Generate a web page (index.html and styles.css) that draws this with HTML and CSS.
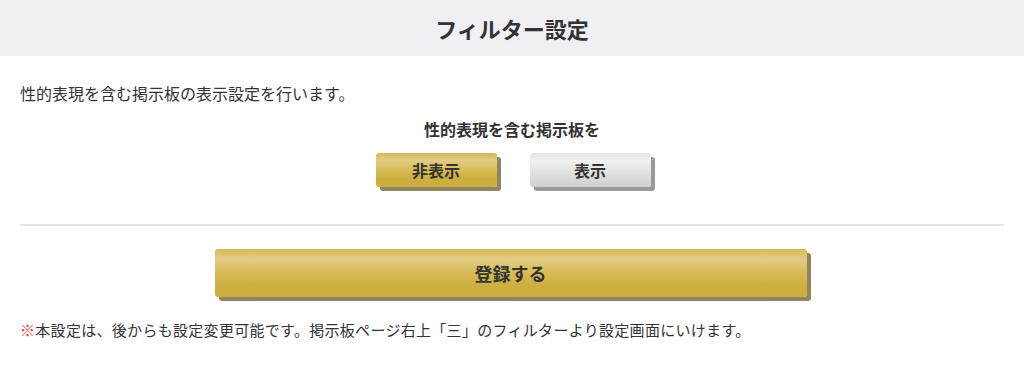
FILE: index.html
```html
<!DOCTYPE html>
<html lang="ja">
<head>
    <meta charset="UTF-8">
    <meta name="viewport" content="width=device-width, initial-scale=1.0">
    <title>フィルター設定</title>
    <link rel="stylesheet" href="styles.css">
</head>
<body>
    <header class="page-header">
        <h1>フィルター設定</h1>
    </header>

    <div class="content">
        <p class="lead">性的表現を含む掲示板の表示設定を行います。</p>

        <div class="filter-choice">
            <h2>性的表現を含む掲示板を</h2>
            <div class="choice-buttons">
                <button class="btn btn-gold btn-small">非表示</button>
                <button class="btn btn-gray btn-small">表示</button>
            </div>
        </div>

        <hr class="divider">

        <div class="submit-row">
            <button class="btn btn-gold btn-submit">登録する</button>
        </div>

        <p class="note"><span class="mark">※</span>本設定は、後からも設定変更可能です。掲示板ページ右上「三」のフィルターより設定画面にいけます。</p>
    </div>
</body>
</html>
```

FILE: styles.css
```css
body { margin: 0; font-family: "Noto Sans CJK JP", "Noto Sans", sans-serif; color: #333; background: #fff; }
.page-header { height: 56px; background: #efeff4; display: flex; align-items: center; justify-content: center; }
.page-header h1 { margin: 0; font-size: 22px; font-weight: bold; color: #333; letter-spacing: 0; }
.content { padding: 0 20px; }
.lead { margin: 26px 0 0; font-size: 16px; line-height: 22px; }
.filter-choice { text-align: center; }
.filter-choice h2 { margin: 13px 0 0; font-size: 16px; line-height: 24px; font-weight: bold; }
.choice-buttons { display: flex; justify-content: center; gap: 33px; margin-top: 12px; padding-left: 2px; }
.btn { border: none; border-radius: 3px; font-family: inherit; font-weight: bold; color: #333; cursor: pointer; padding: 0; }
.btn-small { width: 121px; height: 34px; font-size: 16px; }
.btn-gold { background: linear-gradient(#d6bb55 0%, #e2cb85 22%, #d7bb55 50%, #cdaf40 75%, #ccad3e 100%); box-shadow: 4px 4px 0 #8f8563; }
.btn-gray { background: linear-gradient(#e4e4e4 0%, #f1f1f1 22%, #e2e2e2 55%, #cfcfcf 100%); box-shadow: 4px 4px 0 #9a9a9a; }
.divider { border: none; border-top: 2px solid #e3e3e3; margin: 37px 0 0; }
.submit-row { display: flex; justify-content: center; margin-top: 23px; padding-right: 3px; }
.btn-submit { width: 592px; height: 48px; font-size: 18px; }
.note { margin: 22px 0 0; font-size: 15px; line-height: 22px; letter-spacing: 0.3px; }
.mark { color: #e53a2e; }
```
